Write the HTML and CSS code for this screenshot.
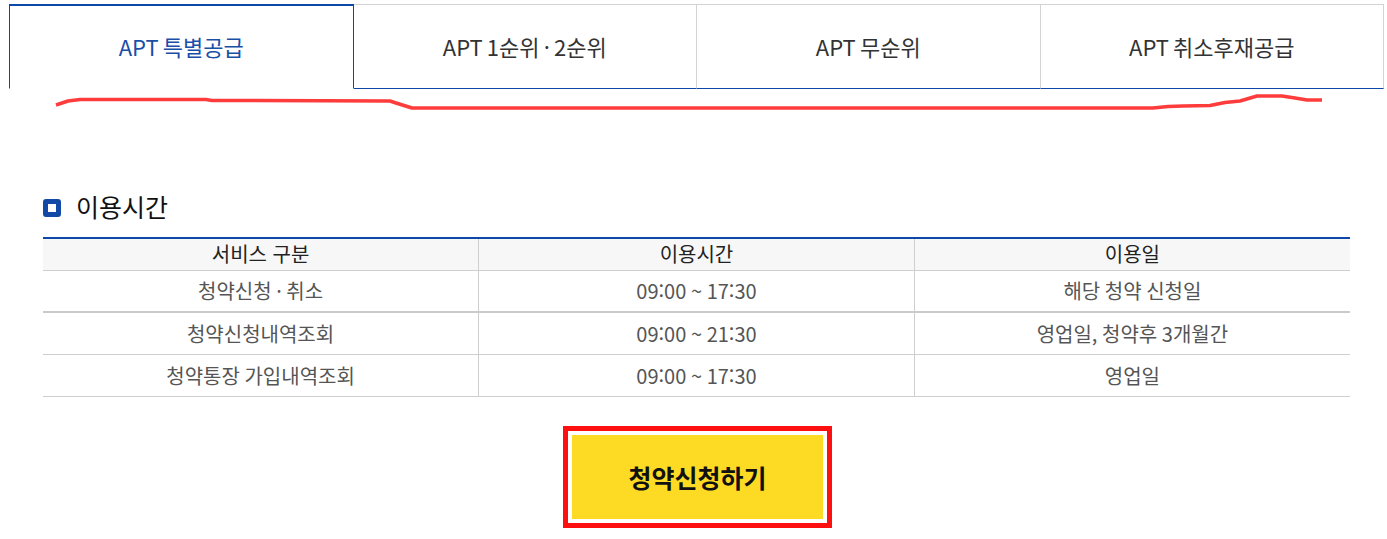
FILE: index.html
```html
<!DOCTYPE html>
<html lang="ko">
<head>
<meta charset="utf-8">
<link rel="stylesheet" href="styles.css">
</head>
<body>
<div class="page">
  <ul class="tabs">
    <li class="tab active">APT 특별공급</li>
    <li class="tab">APT 1순위 · 2순위</li>
    <li class="tab">APT 무순위</li>
    <li class="tab">APT 취소후재공급</li>
  </ul>
  <svg class="scribble" width="1387" height="120" viewBox="0 0 1387 120">
    <polyline points="56,105 68,101 80,99.5 206,99.5 212,100.5 390,101 396,103 412,108 1153,108 1168,106.5 1183,106 1210,105.5 1225,102.5 1240,101 1257,96 1282,96 1295,98 1307,100 1322,100" fill="none" stroke="#ff3c3c" stroke-width="3.5" stroke-linejoin="round"/>
  </svg>
  <section class="content">
    <h2 class="title"><span class="bullet"></span>이용시간</h2>
    <table class="grid">
      <thead>
        <tr><th>서비스 구분</th><th>이용시간</th><th>이용일</th></tr>
      </thead>
      <tbody>
        <tr class="first"><td>청약신청 · 취소</td><td>09:00 ~ 17:30</td><td>해당 청약 신청일</td></tr>
        <tr><td>청약신청내역조회</td><td>09:00 ~ 21:30</td><td>영업일, 청약후 3개월간</td></tr>
        <tr><td>청약통장 가입내역조회</td><td>09:00 ~ 17:30</td><td>영업일</td></tr>
      </tbody>
    </table>
    <div class="actions">
      <div class="highlight"><a class="apply">청약신청하기</a></div>
    </div>
  </section>
</div>
</body>
</html>
```
FILE: styles.css
```css
* { box-sizing: border-box; }
html, body { margin: 0; padding: 0; background: #fff; }
body {
  font-family: "Noto Sans CJK KR", "Noto Sans", sans-serif;
  color: #222;
}
.page { position: relative; width: 1387px; height: 539px; overflow: hidden; }
.tabs {
  list-style: none;
  margin: 0;
  padding: 4px 3px 0 9px;
  display: flex;
}
.tab {
  flex: 1;
  height: 85px;
  display: flex;
  align-items: center;
  justify-content: center;
  font-size: 22px;
  color: #333;
  border-top: 1px solid #d3d3d3;
  border-right: 1px solid #d3d3d3;
  border-bottom: 1px solid #0d47a8;
  padding-bottom: 1px;
  word-spacing: -2px;
}
.tab.active {
  color: #1a4fa8;
  border: 1px solid #0d47a8;
  border-top-width: 2px;
  border-bottom: 1px solid transparent;
  padding-bottom: 2px;
}
.scribble { position: absolute; left: 0; top: 0; pointer-events: none; }
.content { margin: 0 37px 0 43px; padding-top: 100px; }
.title {
  display: flex;
  align-items: center;
  margin: 0 0 13px 0;
  font-size: 25px;
  font-weight: 400;
  color: #111;
  line-height: 35px;
}
.bullet {
  width: 18px;
  height: 18px;
  border: 5px solid #1349a6;
  border-radius: 3px;
  background: #fff;
  margin-right: 15px;
  margin-top: 2px;
}
.grid {
  width: 1307px;
  border-collapse: collapse;
  table-layout: fixed;
  border-top: 2px solid #0d47a8;
}
.grid th {
  background: #f7f7f7;
  font-weight: 400;
  font-size: 20px;
  color: #222;
  height: 32px;
  padding: 0;
  border-bottom: 1px solid #cfcfcf;
  border-left: 1px solid #cfcfcf;
  line-height: 1;
}
.grid td {
  font-size: 20px;
  color: #555;
  height: 42px;
  padding: 0;
  text-align: center;
  border-bottom: 1px solid #cfcfcf;
  border-left: 1px solid #cfcfcf;
  word-spacing: -1px;
}
.grid tr.first td { border-bottom: 2px solid #cacaca; height: 42px; }
.grid th:first-child, .grid td:first-child { border-left: none; }
.actions { display: flex; justify-content: center; padding-top: 29px; }
.highlight {
  border: 5px solid #ff1010;
  padding: 4px;
  margin-left: 2px;
}
.apply {
  display: flex;
  align-items: center;
  justify-content: center;
  width: 251px;
  height: 84px;
  background: #fddb24;
  font-size: 25px;
  font-weight: 700;
  color: #111;
  text-decoration: none;
}
```
